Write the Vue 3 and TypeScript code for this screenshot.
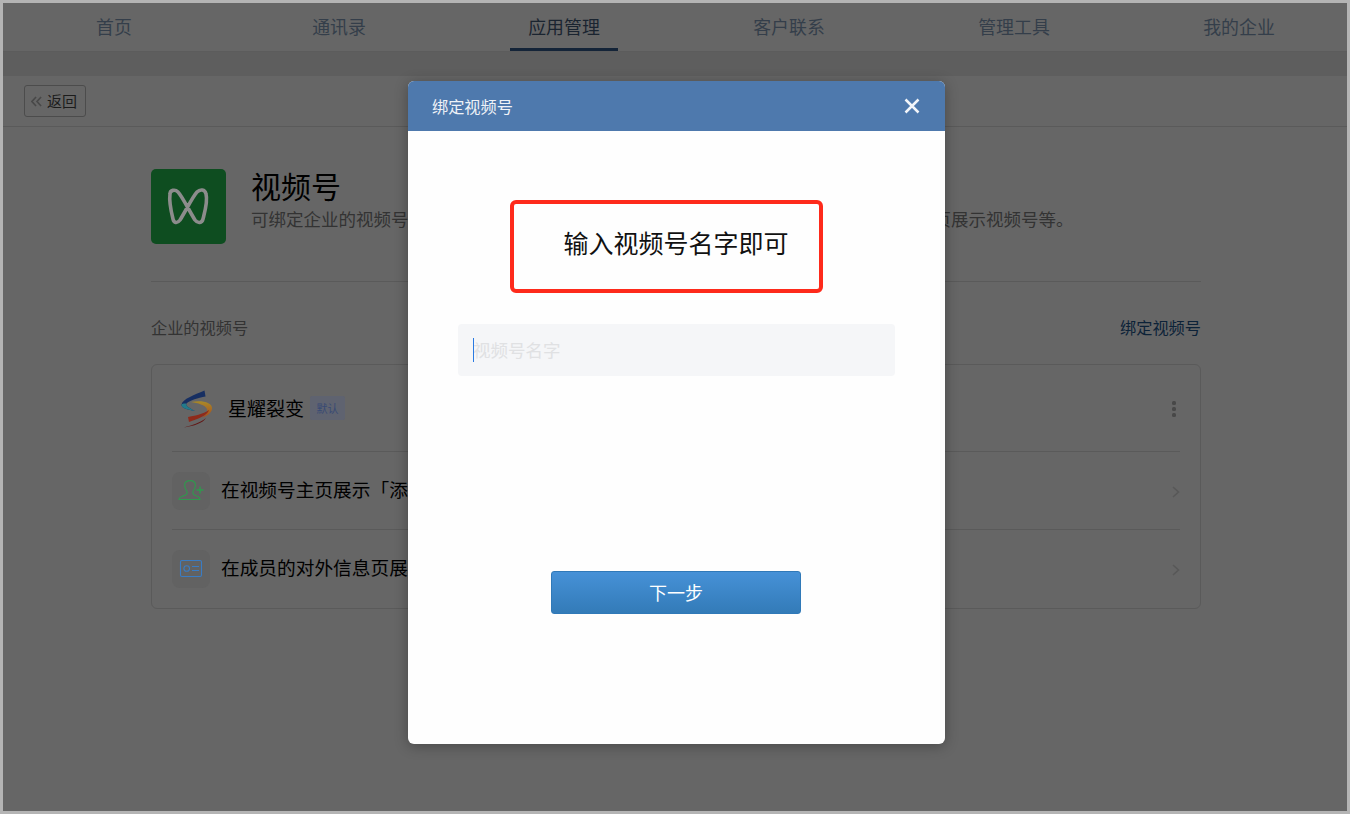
<script setup lang="ts">
const tabs: string[] = ['首页', '通讯录', '应用管理', '客户联系', '管理工具', '我的企业']
const activeTab = '应用管理'
</script>

<template>
  <div class="frame">
    <nav class="tabs">
      <a v-for="tab in tabs" :key="tab" class="tab" :class="{ active: tab === activeTab }">
        <span class="tab-label">{{ tab }}</span>
      </a>
    </nav>
    <div class="band"></div>
    <div class="subbar">
      <button class="back" type="button">
        <svg class="back-icon" viewBox="0 0 12 12" width="11" height="11" fill="none" stroke="#484848" stroke-width="1.7">
          <path d="M5.5 1 L1 6 L5.5 11 M11 1 L6.5 6 L11 11" />
        </svg>
        <span class="back-label">返回</span>
      </button>
    </div>

    <main class="content">
      <header class="app-head">
        <div class="app-icon">
          <svg viewBox="0 0 75 75" width="75" height="75" fill="none" stroke="#8c8c8c" stroke-width="3.6" stroke-linejoin="round">
            <path d="M19 25 C19 21 24 20 27 23 C31 27 40 45 44 51 C47 55 51 54 52 50 C54 42 57 32 55 25 C54 20 49 20 46 23 C42 27 33 45 29 51 C26 55 23 54 22 50 C20 42 18 32 19 25 Z" />
          </svg>
        </div>
        <div class="app-text">
          <h1>视频号</h1>
          <p>可绑定企业的视频号，并可在视频号主页展示「添加企业微信」入口，在成员的对外信息页展示视频号等。</p>
        </div>
      </header>

      <div class="section-head">
        <span class="section-title">企业的视频号</span>
        <a class="section-link">绑定视频号</a>
      </div>

      <section class="card">
        <div class="row row-account">
          <svg class="logo" viewBox="0 0 40 40" width="40" height="40">
            <defs>
              <linearGradient id="arc" x1="0" y1="0" x2="0" y2="1">
                <stop offset="0" stop-color="#a88a28" />
                <stop offset="1" stop-color="#a84a1c" />
              </linearGradient>
            </defs>
            <path d="M28.5 2.5 L29.5 8.5 C22 10 14 12 10.5 15.5 C9 17.5 13 20 19 23 C11 21.5 5 20 5.5 16.5 C6.5 11 18 7 28.5 2.5 Z" fill="#172f62" />
            <path d="M5.5 16.5 C5 20 11 21.5 19 23 C13 20 9 17.5 10.5 15.5 C8 15.2 6.5 15.5 5.5 16.5 Z" fill="#237a8a" />
            <path d="M15 14 C25 12 37 14 36 21 C35 26 30 28 26 30 C29 27 32 24 31 21 C29 17 22 15 15 14 Z" fill="url(#arc)" />
            <path d="M12 29 C18 28 27 26 33 22 C32 27 22 31 13 34 Z" fill="#8e2b1b" />
            <path d="M8 39.5 C16 37 24 35 30 30 C27 35 18 38 8 39.5 Z" fill="#621614" />
          </svg>
          <span class="account-name">星耀裂变</span>
          <span class="badge">默认</span>
          <span class="dots"><i></i><i></i><i></i></span>
        </div>
        <div class="row row-link">
          <span class="row-icon">
            <svg viewBox="0 0 38 38" width="38" height="38" fill="none" stroke="#2f9a4d" stroke-width="1.1">
              <path d="M7 27.5 H28 C28 25.2 26 24.4 23.6 23.5 C21 22.5 20.4 21 21 19.6 C22.6 17.4 23.4 15.4 23.4 13 C23.4 10.2 21 8.6 18 8.6 C15 8.6 12.6 10.2 12.6 13 C12.6 15.4 13.4 17.4 15 19.6 C15.6 21 15 22.5 12.4 23.5 C10 24.4 7 25.2 7 27.5 Z" />
              <path d="M24.5 18 H31.5 M28 14.5 V21.5" stroke-width="1.4" />
            </svg>
          </span>
          <span class="row-text">在视频号主页展示「添加企业微信」入口</span>
          <svg class="chevron" viewBox="0 0 8 12" width="8" height="12" fill="none" stroke="#585858" stroke-width="1.6"><path d="M1 1 L6.5 6 L1 11" /></svg>
        </div>
        <div class="row row-link">
          <span class="row-icon">
            <svg viewBox="0 0 38 38" width="38" height="38" fill="none" stroke="#3a7cc4" stroke-width="1.1">
              <rect x="8.5" y="10.5" width="21" height="16" rx="1.5" />
              <circle cx="14.7" cy="18.5" r="2.8" />
              <path d="M20 16.5 H27 M20 20.5 H27" />
            </svg>
          </span>
          <span class="row-text">在成员的对外信息页展示视频号</span>
          <svg class="chevron" viewBox="0 0 8 12" width="8" height="12" fill="none" stroke="#585858" stroke-width="1.6"><path d="M1 1 L6.5 6 L1 11" /></svg>
        </div>
      </section>
    </main>

    <div class="dialog" role="dialog">
      <div class="dialog-head">
        <span>绑定视频号</span>
        <svg class="close" viewBox="0 0 16 16" width="16" height="16" fill="none" stroke="#f2f5f9" stroke-width="2.5">
          <path d="M1.5 1.5 L14.5 14.5 M14.5 1.5 L1.5 14.5" />
        </svg>
      </div>
      <div class="dialog-body">
        <div class="callout">输入视频号名字即可</div>
        <div class="field">
          <span class="caret"></span>
          <span class="placeholder">视频号名字</span>
        </div>
        <button class="next" type="button">下一步</button>
      </div>
    </div>
  </div>
</template>

<style>
html, body { margin: 0; background: #b4b4b4; }
</style>

<style scoped>
.frame {
  position: relative;
  width: 1350px;
  height: 814px;
  box-sizing: border-box;
  border: 3px solid #b4b4b4;
  background: #666;
  overflow: hidden;
  font-family: "Noto Sans CJK SC", "Liberation Sans", sans-serif;
  color: #000;
}
.tabs {
  display: grid;
  grid-template-columns: repeat(6, 225px);
  height: 49px;
  margin-left: -1.5px;
  width: 1350px;
  box-sizing: border-box;
  border-bottom: 1px solid #5c5c5c;
}
.tab { display: flex; justify-content: center; }
.tab-label {
  display: block;
  height: 48px;
  line-height: 46px;
  padding: 0 18.5px;
  box-sizing: border-box;
  font-size: 17.9px;
  color: #343e4a;
}
.tab.active .tab-label { border-bottom: 3px solid #142438; color: #1a2430; }
.band { height: 24px; background: #5e5e5e; }
.subbar {
  height: 51px;
  box-sizing: border-box;
  display: flex;
  align-items: center;
  padding: 0 0 0 21px;
  border-bottom: 1px solid #5a5a5a;
}
.back {
  display: flex;
  align-items: center;
  gap: 5px;
  width: 62px;
  height: 32px;
  padding: 0 0 0 6px;
  box-sizing: border-box;
  background: transparent;
  border: 1px solid #4c4c4c;
  border-radius: 3px;
  font: inherit;
  font-size: 15px;
  color: #1c1c1c;
}
.back-label { margin-bottom: 1px; }
.content { width: 1050px; margin-left: 148px; }
.app-head {
  display: flex;
  gap: 25px;
  padding: 42px 0 37px;
  border-bottom: 1px solid #5a5a5a;
}
.app-icon {
  flex: none;
  width: 75px;
  height: 75px;
  border-radius: 5px;
  background: #0e4d20;
}
.app-text { min-width: 0; }
.app-text h1 {
  margin: -3px 0 2px;
  font-size: 30px;
  line-height: 38px;
  font-weight: 400;
  color: #000;
}
.app-text p {
  margin: 0;
  font-size: 17.5px;
  line-height: 26px;
  white-space: nowrap;
  color: #333;
}
.section-head {
  display: flex;
  justify-content: space-between;
  align-items: center;
  box-sizing: border-box;
  height: 82px;
  padding-top: 8px;
  font-size: 16.2px;
}
.section-title { color: #333; }
.section-link { color: #0c2238; }
.card {
  box-sizing: border-box;
  height: 245px;
  border: 1px solid #5a5a5a;
  border-radius: 6px;
  padding: 0 20px;
}
.row { display: flex; align-items: center; border-bottom: 1px solid #5a5a5a; }
.row:last-child { border-bottom: 0; }
.row-account { height: 86px; }
.row-link { height: 77px; }
.row-link:last-child { height: 78px; }
.logo { flex: none; margin: 0 12px 0 4px; }
.account-name { font-size: 19px; color: #000; margin-bottom: 1px; }
.badge {
  margin-left: 6px;
  width: 35px;
  height: 24px;
  line-height: 24px;
  text-align: center;
  font-size: 11px;
  border-radius: 2px;
  background: #5f6370;
  color: #384a74;
}
.dots {
  margin-left: auto;
  margin-right: 4px;
  margin-top: 1px;
  display: flex;
  flex-direction: column;
  gap: 2px;
}
.dots i { display: block; width: 4px; height: 4px; border-radius: 1.5px; background: #484848; }
.row-icon {
  flex: none;
  width: 38px;
  height: 38px;
  border-radius: 8px;
  background: #626262;
  margin-right: 11px;
}
.row-icon svg { display: block; }
.row-text { font-size: 18.7px; color: #000; white-space: nowrap; margin-bottom: 5px; }
.chevron { margin-left: auto; margin-top: 2px; }
.dialog {
  position: absolute;
  left: 405px;
  top: 78px;
  width: 537px;
  height: 663px;
  border-radius: 6px;
  overflow: hidden;
  background: #fefefe;
  box-shadow: 0 2px 14px rgba(0, 0, 0, 0.3);
}
.dialog-head {
  height: 50px;
  background: #4e79ad;
  display: flex;
  align-items: center;
  justify-content: space-between;
  padding: 0 25px 0 24px;
  font-size: 16.2px;
  color: #eef2f7;
}
.dialog-body {
  display: flex;
  flex-direction: column;
  align-items: center;
  padding-top: 69px;
}
.callout {
  width: 313px;
  height: 93px;
  margin-right: 21px;
  box-sizing: border-box;
  border: 4px solid #fe2a1b;
  border-radius: 6px;
  padding-left: 50px;
  font-size: 25px;
  line-height: 76px;
  color: #111;
  white-space: nowrap;
}
.field {
  position: relative;
  margin-top: 31px;
  width: 437px;
  height: 52px;
  border-radius: 4px;
  background: #f5f6f8;
  display: flex;
  align-items: center;
  padding: 0 0 2px 15px;
  box-sizing: border-box;
  font-size: 17.5px;
}
.caret { position: absolute; left: 15px; top: 14px; width: 1px; height: 24px; background: #2a7ae2; }
.placeholder { color: #e0e1e3; }
.next {
  margin-top: 195px;
  margin-right: 1px;
  width: 250px;
  height: 43px;
  padding: 0 0 2px;
  border: 1px solid #3079b8;
  border-radius: 3px;
  background: linear-gradient(#4691d7, #337bb8);
  color: #fff;
  font: inherit;
  font-size: 18px;
}
</style>
